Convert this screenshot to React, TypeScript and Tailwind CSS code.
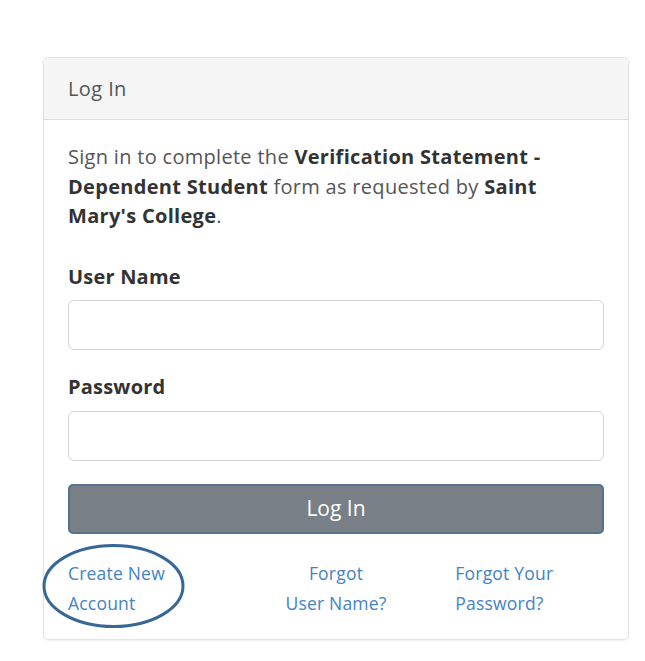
export default function App() {
  return (
    <div className="min-h-[661px] bg-white pt-[57px] pl-[43px]" style={{ fontFamily: '"Open Sans", "Noto Sans", sans-serif' }}>
      <div className="w-[586px] rounded-[5px] border border-[#e3e3e3] bg-white shadow-[0_1px_2px_rgba(0,0,0,0.06)]">
        <div className="flex h-[62px] items-center rounded-t-[5px] border-b border-[#dedede] bg-[#f5f5f5] px-[24px] text-[20px] tracking-[0.4px] text-[#555]">
          Log In
        </div>

        <div className="px-[24px] pt-[22px] pb-[21px]">
          <p className="text-[20px] leading-[29.5px] tracking-[0.3px] text-[#555]">
            Sign in to complete the <b className="font-bold text-[#333]">Verification Statement - Dependent Student</b> form as
            requested by <b className="font-bold text-[#333]">Saint Mary's College</b>.
          </p>

          <label className="mt-[31px] block text-[20px] font-bold leading-[30px] tracking-[0.2px] text-[#333]">User Name</label>
          <input className="mt-[8px] block h-[50px] w-full rounded-[6px] border border-[#d3d3d3] px-3 outline-none" />

          <label className="mt-[22px] block text-[20px] font-bold leading-[30px] tracking-[0.2px] text-[#333]">Password</label>
          <input type="password" className="mt-[9px] block h-[50px] w-full rounded-[6px] border border-[#d3d3d3] px-3 outline-none" />

          <button className="mt-[23px] block h-[50px] w-full rounded-[5px] border-2 border-[#55728e] bg-[#787f86] text-[21px] text-white">
            Log In
          </button>

          <div className="relative mt-[24px] grid grid-cols-3 text-[17.5px] leading-[30px] tracking-[0.2px] text-[#4383c4]">
            <svg className="absolute left-[-26px] top-[-15px]" width="143" height="86" viewBox="0 0 143 86">
              <ellipse cx="71.5" cy="43" rx="69.5" ry="40.5" fill="none" stroke="#366795" strokeWidth="3" />
            </svg>
            <a className="block">
              Create New
              <br />
              Account
            </a>
            <a className="block text-center">
              Forgot
              <br />
              User Name?
            </a>
            <a className="block pl-[30px]">
              Forgot Your
              <br />
              Password?
            </a>
          </div>
        </div>
      </div>
    </div>
  );
}
